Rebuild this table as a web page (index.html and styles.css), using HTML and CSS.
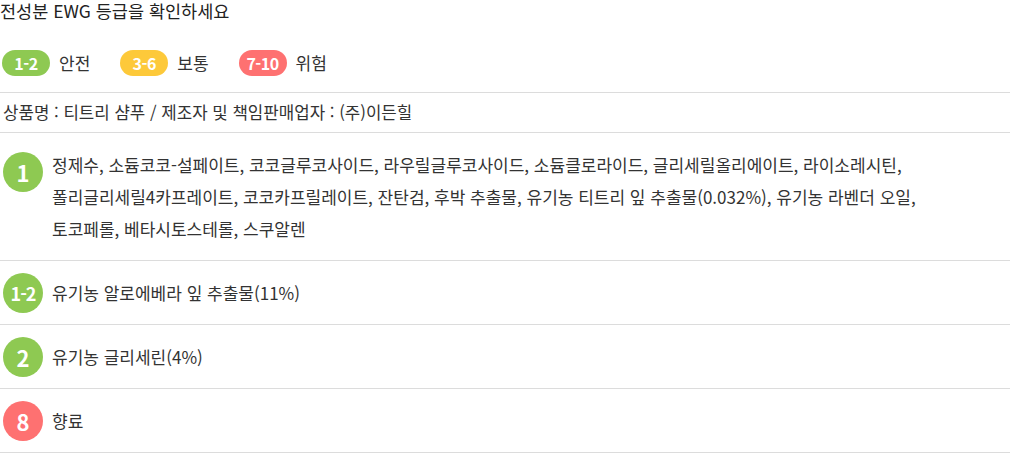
FILE: index.html
```html
<!DOCTYPE html>
<html lang="ko">
<head>
<meta charset="utf-8">
<title>전성분 EWG 등급</title>
<link rel="stylesheet" href="styles.css">
</head>
<body>
<section class="ewg">
  <h2 class="ewg__title">전성분 EWG 등급을 확인하세요</h2>
  <ul class="legend">
    <li class="legend__item"><span class="pill pill--safe">1-2</span><span class="legend__label">안전</span></li>
    <li class="legend__item"><span class="pill pill--normal">3-6</span><span class="legend__label">보통</span></li>
    <li class="legend__item"><span class="pill pill--danger">7-10</span><span class="legend__label">위험</span></li>
  </ul>
  <p class="product">상품명 : 티트리 샴푸 / 제조자 및 책임판매업자 : (주)이든힐</p>
  <ul class="ingredients">
    <li class="ingredient ingredient--multi">
      <span class="grade grade--safe">1</span>
      <p class="ingredient__text">정제수, 소듐코코-설페이트, 코코글루코사이드, 라우릴글루코사이드, 소듐클로라이드, 글리세릴올리에이트, 라이소레시틴, 폴리글리세릴4카프레이트, 코코카프릴레이트, 잔탄검, 후박 추출물, 유기농 티트리 잎 추출물(0.032%), 유기농 라벤더 오일, 토코페롤, 베타시토스테롤, 스쿠알렌</p>
    </li>
    <li class="ingredient">
      <span class="grade grade--safe grade--small">1-2</span>
      <p class="ingredient__text">유기농 알로에베라 잎 추출물(11%)</p>
    </li>
    <li class="ingredient">
      <span class="grade grade--safe">2</span>
      <p class="ingredient__text">유기농 글리세린(4%)</p>
    </li>
    <li class="ingredient">
      <span class="grade grade--danger">8</span>
      <p class="ingredient__text">향료</p>
    </li>
  </ul>
</section>
</body>
</html>
```

FILE: styles.css
```css
* { box-sizing: border-box; }

html, body {
  margin: 0;
  padding: 0;
  background: #fff;
}

body {
  font-family: "Noto Sans CJK KR", "Noto Sans", sans-serif;
  color: #333;
  width: 1010px;
  word-break: keep-all;
}

.ewg__title {
  margin: 0;
  font-size: 17.5px;
  line-height: 21px;
  font-weight: 400;
  color: #222;
}

.legend {
  list-style: none;
  margin: 29px 0 16px;
  padding: 0 0 0 2px;
  display: flex;
  gap: 30px;
}

.legend__item {
  display: flex;
  align-items: center;
  gap: 9px;
}

.legend__label {
  font-size: 17px;
  line-height: 26px;
  color: #333;
}

.pill {
  display: inline-block;
  width: 48px;
  height: 26px;
  border-radius: 13px;
  color: #fff;
  font-weight: 700;
  font-size: 16px;
  line-height: 26px;
  text-align: center;
  letter-spacing: -0.5px;
}

.pill--safe, .grade--safe { background: #8ec952; }
.pill--normal { background: #fdc93a; }
.pill--danger, .grade--danger { background: #fe7171; }

.product {
  margin: 0;
  padding: 8px 3px;
  font-size: 16.8px;
  line-height: 23px;
  border-top: 1px solid #dcdcdc;
  border-bottom: 1px solid #dcdcdc;
  color: #333;
}

.ingredients {
  list-style: none;
  margin: 0;
  padding: 0;
}

.ingredient {
  display: flex;
  align-items: center;
  padding: 11.5px 0 11.5px 3px;
  border-bottom: 1px solid #dcdcdc;
}

.ingredient--multi {
  align-items: flex-start;
}

.ingredient--multi .grade {
  margin-top: 7.5px;
}

.grade {
  flex: none;
  width: 40px;
  height: 40px;
  border-radius: 50%;
  color: #fff;
  font-weight: 700;
  font-size: 22px;
  line-height: 40px;
  text-align: center;
  margin-right: 9px;
}

.grade--small {
  font-size: 18px;
  letter-spacing: -1px;
}

.ingredient__text {
  margin: 0;
  padding: 4px 45px 4px 0;
  font-size: 17px;
  line-height: 32px;
  color: #333;
}
```
